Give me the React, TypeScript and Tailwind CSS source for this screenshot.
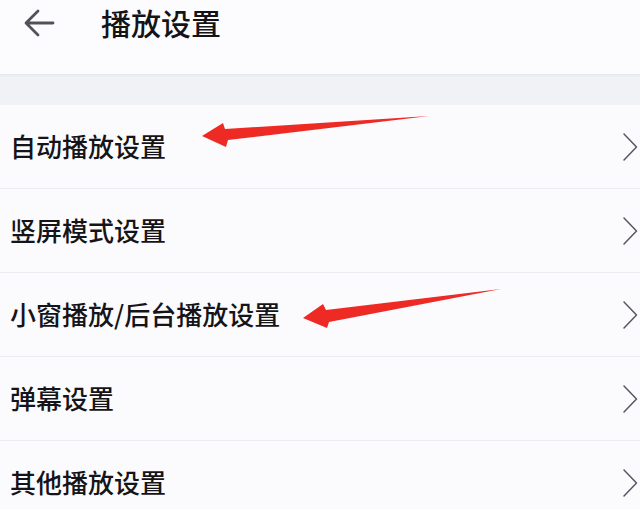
const items = [
  '自动播放设置',
  '竖屏模式设置',
  '小窗播放/后台播放设置',
  '弹幕设置',
  '其他播放设置',
]

function BackArrow() {
  return (
    <svg width="32" height="32" viewBox="0 0 32 32" fill="none">
      <path
        d="M30 16H4M15 4L3 16l12 12"
        stroke="#505258"
        strokeWidth="2.8"
        strokeLinecap="round"
        strokeLinejoin="round"
      />
    </svg>
  )
}

function Chevron() {
  return (
    <svg width="16" height="30" viewBox="0 0 16 30" fill="none">
      <path d="M2 2l12.5 13L2 28" stroke="#555863" strokeWidth="1.5" strokeLinecap="round" strokeLinejoin="round" />
    </svg>
  )
}

export default function App() {
  return (
    <div
      className="relative w-[640px] h-[509px] overflow-hidden bg-[#f1f2f5]"
      style={{ fontFamily: '"Noto Sans CJK SC", "Noto Sans", sans-serif' }}
    >
      <header className="h-[75px] bg-[#fcfcfe] border-b border-[#e6e7ea] shadow-[0_1px_2px_rgba(0,0,0,0.04)] flex items-start pt-[3px]">
        <div className="w-[101px] pl-[23px] pt-[4px]">
          <BackArrow />
        </div>
        <h1 className="text-[30px] leading-[38px] text-[#141418] font-medium">播放设置</h1>
      </header>

      <div className="h-[30px]" />

      <ul className="bg-[#fbfbfd]">
        {items.map(label => (
          <li
            key={label}
            className="h-[84px] border-b border-[#ebecf0] flex items-center justify-between pl-[10px] pr-[2px]"
          >
            <span className="text-[26px] leading-none text-[#141419] font-medium -mt-[2px]">{label}</span>
            <Chevron />
          </li>
        ))}
      </ul>

      {/* red annotation arrows */}
      <svg className="absolute inset-0 pointer-events-none" width="640" height="509" viewBox="0 0 640 509">
        <polygon points="202,136 223,123 225,129 429,116 228,140 226,147" fill="#ee2a24" />
        <polygon points="303,318 323,304 326,310 501,289 329,322 327,328" fill="#ee2a24" />
      </svg>
    </div>
  )
}
